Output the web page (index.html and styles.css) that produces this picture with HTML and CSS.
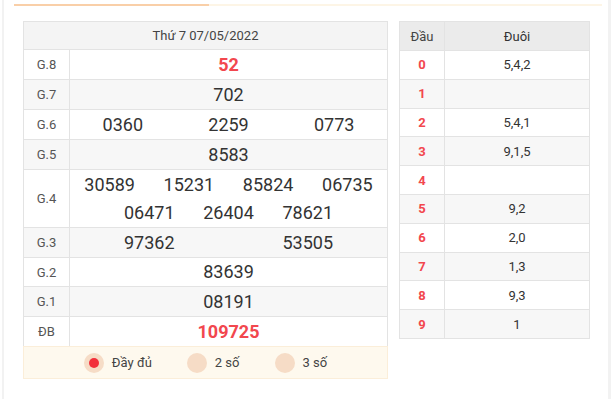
FILE: index.html
```html
<!DOCTYPE html>
<html lang="vi">
<head>
<meta charset="utf-8">
<link rel="stylesheet" href="styles.css">
</head>
<body>
<div class="page">
  <div class="tabline"><span class="tab-active"></span><span class="tab-rest"></span></div>
  <div class="content">
    <div class="results">
      <div class="row head"><div class="title">Thứ 7 07/05/2022</div></div>
      <div class="row"><div class="lbl">G.8</div><div class="nums"><span class="n red">52</span></div></div>
      <div class="row alt"><div class="lbl">G.7</div><div class="nums"><span class="n">702</span></div></div>
      <div class="row"><div class="lbl">G.6</div><div class="nums"><span class="n w3">0360</span><span class="n w3">2259</span><span class="n w3">0773</span></div></div>
      <div class="row alt"><div class="lbl">G.5</div><div class="nums"><span class="n">8583</span></div></div>
      <div class="row tall"><div class="lbl">G.4</div><div class="nums"><span class="n w4">30589</span><span class="n w4">15231</span><span class="n w4">85824</span><span class="n w4">06735</span><span class="n w4">06471</span><span class="n w4">26404</span><span class="n w4">78621</span></div></div>
      <div class="row alt"><div class="lbl">G.3</div><div class="nums"><span class="n w2">97362</span><span class="n w2">53505</span></div></div>
      <div class="row short"><div class="lbl">G.2</div><div class="nums"><span class="n">83639</span></div></div>
      <div class="row alt"><div class="lbl">G.1</div><div class="nums"><span class="n">08191</span></div></div>
      <div class="row"><div class="lbl">ĐB</div><div class="nums"><span class="n red">109725</span></div></div>
      <div class="options">
        <label class="opt"><span class="radio on"></span>Đầy đủ</label>
        <label class="opt"><span class="radio"></span>2 số</label>
        <label class="opt"><span class="radio"></span>3 số</label>
      </div>
    </div>
    <div class="loto">
      <div class="lrow lhead"><div class="dau">Đầu</div><div class="duoi">Đuôi</div></div>
      <div class="lrow"><div class="dau red">0</div><div class="duoi">5,4,2</div></div>
      <div class="lrow alt"><div class="dau red">1</div><div class="duoi"></div></div>
      <div class="lrow"><div class="dau red">2</div><div class="duoi">5,4,1</div></div>
      <div class="lrow alt"><div class="dau red">3</div><div class="duoi">9,1,5</div></div>
      <div class="lrow"><div class="dau red">4</div><div class="duoi"></div></div>
      <div class="lrow alt"><div class="dau red">5</div><div class="duoi">9,2</div></div>
      <div class="lrow"><div class="dau red">6</div><div class="duoi">2,0</div></div>
      <div class="lrow alt"><div class="dau red">7</div><div class="duoi">1,3</div></div>
      <div class="lrow"><div class="dau red">8</div><div class="duoi">9,3</div></div>
      <div class="lrow alt"><div class="dau red">9</div><div class="duoi">1</div></div>
    </div>
  </div>
</div>
</body>
</html>
```

FILE: styles.css
```css
* { box-sizing: border-box; }
html, body { margin: 0; padding: 0; background: #fff; }
body { font-family: Roboto, "Liberation Sans", sans-serif; color: #333; }

.page {
  margin: 0 2px;
  height: 399px;
  border-left: 2px solid #f2f2f2;
  border-right: 3px solid #f2f2f2;
}

.tabline {
  display: flex;
  padding: 4px 6px 0 10px;
  height: 6px;
}
.tab-active { width: 195px; height: 2px; background: #f9cfa8; }
.tab-rest { flex: 1; height: 2px; background: #fdf5e6; }

.content {
  display: flex;
  align-items: flex-start;
  gap: 11px;
  padding: 15px 0 0 19px;
}

.results {
  width: 365px;
  border: 1px solid #e3e3e3;
  border-bottom: none;
}

.row {
  display: flex;
  height: 30px;
  border-bottom: 1px solid #e3e3e3;
}
.row.head { height: 28px; background: #f4f4f4; }
.row.tall { height: 58px; }
.row.short { height: 29px; }
.row.alt { background: #f7f7f7; }

.title {
  flex: 1;
  display: flex;
  align-items: center;
  justify-content: center;
  font-size: 13px;
  color: #444;
}

.lbl {
  width: 46px;
  flex: none;
  border-right: 1px solid #e3e3e3;
  display: flex;
  align-items: center;
  justify-content: center;
  font-size: 13px;
  color: #555;
}

.nums {
  flex: 1;
  display: flex;
  flex-wrap: wrap;
  align-items: center;
  align-content: center;
  justify-content: center;
}
.n {
  font-size: 18px;
  line-height: 28px;
  color: #333;
  text-align: center;
}
.n.red { color: #f2474e; font-weight: 700; }
.w2 { width: 50%; }
.w3 { width: 33.333%; }
.w4 { width: 25%; }

.options {
  display: flex;
  align-items: center;
  justify-content: center;
  gap: 35px;
  height: 33px;
  background: #fef9ee;
  border-top: 1px solid #fbeed9;
  border-bottom: 1px solid #fbeed9;
  margin: -1px -1px 0 -1px;
  border-left: 1px solid #fbeed9;
  border-right: 1px solid #fbeed9;
}
.opt {
  display: flex;
  align-items: center;
  gap: 8px;
  font-size: 13px;
  color: #444;
}
.radio {
  width: 20px;
  height: 20px;
  border-radius: 50%;
  background: #f6dcc6;
  display: flex;
  align-items: center;
  justify-content: center;
}
.radio.on::after {
  content: "";
  width: 10px;
  height: 10px;
  border-radius: 50%;
  background: #f2303b;
}

.loto {
  width: 191px;
  border: 1px solid #e3e3e3;
  border-bottom: none;
}
.lrow {
  display: flex;
  height: 28.8px;
  border-bottom: 1px solid #e3e3e3;
  font-size: 13px;
}
.lrow.lhead { height: 29px; background: #ebebeb; color: #444; }
.lrow.alt { background: #f7f7f7; }
.dau {
  width: 45px;
  flex: none;
  border-right: 1px solid #e3e3e3;
  display: flex;
  align-items: center;
  justify-content: center;
}
.dau.red { color: #f2474e; font-weight: 700; }
.duoi {
  flex: 1;
  display: flex;
  align-items: center;
  justify-content: center;
  color: #333;
}
```
